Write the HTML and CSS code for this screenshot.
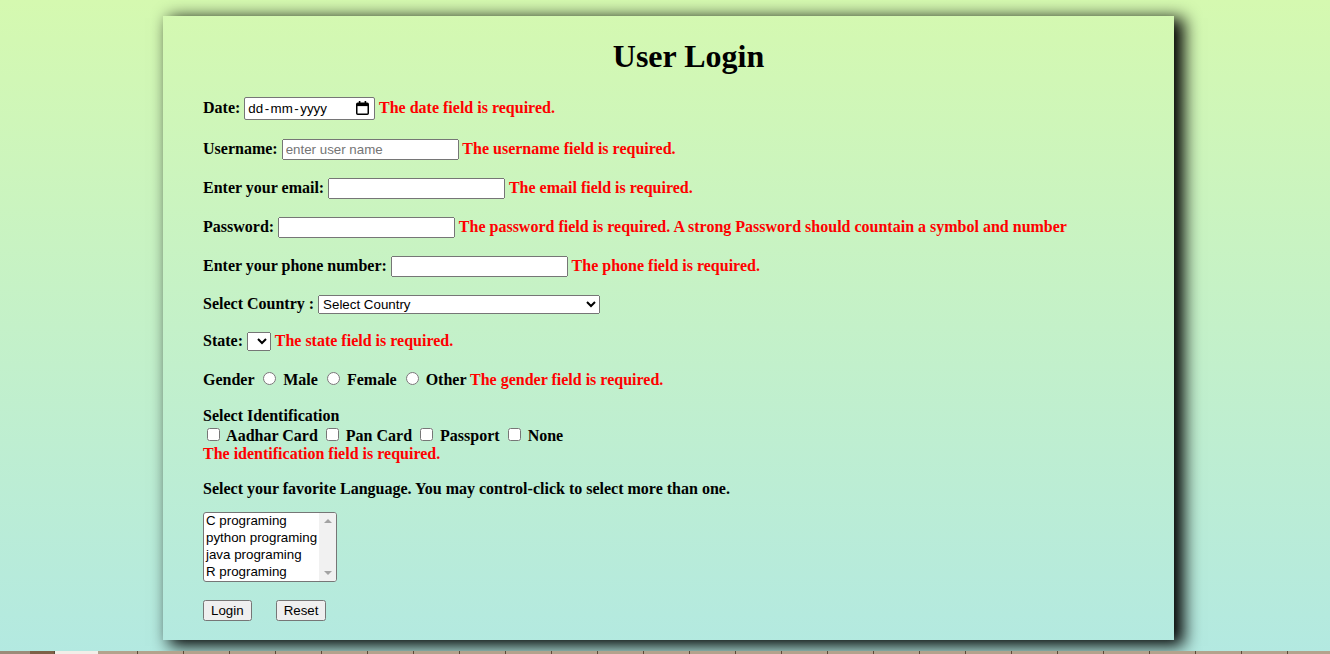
FILE: index.html
```html
<!DOCTYPE html>
<html lang="en">
<head>
<meta charset="utf-8">
<title>User Login</title>
<link rel="stylesheet" href="styles.css">
</head>
<body>
<div class="card">
  <h1 class="title">User Login</h1>
  <form class="form">
    <p class="row row-date">Date: <span class="datebox"><span class="dateval">dd<span class="sep">-</span>mm<span class="sep">-</span>yyyy</span><svg class="calicon" width="13" height="14" viewBox="0 0 13 14" aria-hidden="true"><rect x="2.8" y="0" width="1.6" height="2.5" fill="#000"/><rect x="8.6" y="0" width="1.6" height="2.5" fill="#000"/><rect x="0.75" y="2.25" width="11.5" height="11" rx="1" fill="none" stroke="#000" stroke-width="1.5"/><rect x="1" y="2.5" width="11" height="2.6" fill="#000"/></svg></span> <span class="err">The date field is required.</span></p>
    <p class="row">Username: <input class="field" type="text" placeholder="enter user name"> <span class="err">The username field is required.</span></p>
    <p class="row">Enter your email: <input class="field" type="email"> <span class="err">The email field is required.</span></p>
    <p class="row">Password: <input class="field" type="password"> <span class="err">The password field is required. A strong Password should countain a symbol and number</span></p>
    <p class="row">Enter your phone number: <input class="field" type="tel"> <span class="err">The phone field is required.</span></p>
    <p class="row">Select Country : <select class="country"><option>Select Country</option><option>India</option><option>USA</option></select></p>
    <p class="row">State: <select class="state"></select> <span class="err">The state field is required.</span></p>
    <p class="row">Gender <input type="radio" name="gender"> Male <input type="radio" name="gender"> Female <input type="radio" name="gender"> Other <span class="err">The gender field is required.</span></p>
    <p class="row row-ident">Select Identification<br><input type="checkbox"> Aadhar Card <input type="checkbox"> Pan Card <input type="checkbox"> Passport <input type="checkbox"> None<br><span class="err">The identification field is required.</span></p>
    <p class="row row-lang">Select your favorite Language. You may control-click to select more than one.</p>
    <div class="listwrap">
      <select class="langs" multiple size="4">
        <option>C programing</option>
        <option>python programing</option>
        <option>java programing</option>
        <option>R programing</option>
      </select>
      <div class="fakebar" aria-hidden="true"><span class="arrow arrow-up"></span><span class="arrow arrow-down"></span></div>
    </div>
    <p class="row buttons"><button class="btn" type="button">Login</button><button class="btn btn-reset" type="reset">Reset</button></p>
  </form>
</div>
<div class="strip"></div>
</body>
</html>
```
FILE: styles.css
```css
html {
  min-height: 100%;
  background: linear-gradient(to bottom, #d5f9b0 0%, #b3e9e1 100%);
}
body {
  margin: 0;
  font-family: "Liberation Serif", "Times New Roman", serif;
  font-size: 16px;
  font-weight: bold;
  color: #000;
}
.card {
  display: flow-root;
  box-sizing: border-box;
  width: 1011px;
  height: 624px;
  margin: 16px 0 11px 163px;
  padding: 1px 0 0 40px;
  box-shadow: 8px 4px 16px 2px #000;
}
.title {
  text-align: center;
  font-size: 32px;
  margin: 21.44px 0;
}
.row {
  margin: 18px 0;
}
.row-date {
  margin-bottom: 19px;
}
.row-ident {
  margin-bottom: 17px;
}
.row-lang {
  margin-top: 17px;
}
.err {
  color: #ff0000;
}
.field,
.country,
.state,
.langs,
.btn {
  font-family: "Liberation Sans", Arial, sans-serif;
  font-size: 13.333px;
  font-weight: normal;
}
.field {
  box-sizing: border-box;
  width: 177px;
  height: 21px;
}
.field::placeholder {
  color: #757575;
}
.datebox {
  display: inline-flex;
  align-items: center;
  justify-content: space-between;
  box-sizing: border-box;
  width: 131px;
  height: 23px;
  padding: 0 5px 0 3px;
  background: #fff;
  border: 1px solid #767676;
  border-radius: 2px;
  font-family: "Liberation Sans", Arial, sans-serif;
  font-size: 13.333px;
  font-weight: normal;
}
.sep {
  margin: 0 1.5px;
}
.calicon {
  display: block;
}
.country {
  width: 282px;
}
.state {
  width: 24px;
}
.listwrap {
  position: relative;
  width: 134px;
  height: 70px;
  margin-top: -4px;
}
.langs {
  display: block;
  box-sizing: border-box;
  width: 134px;
  height: 70px;
  border-radius: 3px;
}
.fakebar {
  position: absolute;
  top: 1px;
  right: 1px;
  bottom: 1px;
  width: 17px;
  background: #f1f1f1;
  border-radius: 0 2px 2px 0;
  display: flex;
  flex-direction: column;
  justify-content: space-between;
  align-items: center;
  padding: 6px 0;
  box-sizing: border-box;
}
.arrow {
  width: 0;
  height: 0;
  border-left: 4px solid transparent;
  border-right: 4px solid transparent;
}
.arrow-up {
  border-bottom: 4px solid #a3a3a3;
}
.arrow-down {
  border-top: 4px solid #a3a3a3;
}
.btn {
  height: 21px;
}
.btn-reset {
  margin-left: 24px;
}
.strip {
  height: 3px;
  background:
    linear-gradient(to right, #9b8b79 0 30px, #7d6147 30px 54px, #5a4a3a 54px 55px, #f2eee8 55px 98px, transparent 98px),
    repeating-linear-gradient(to right, #b3a38d 0 45px, #5d4a38 45px 46px);
}
```
